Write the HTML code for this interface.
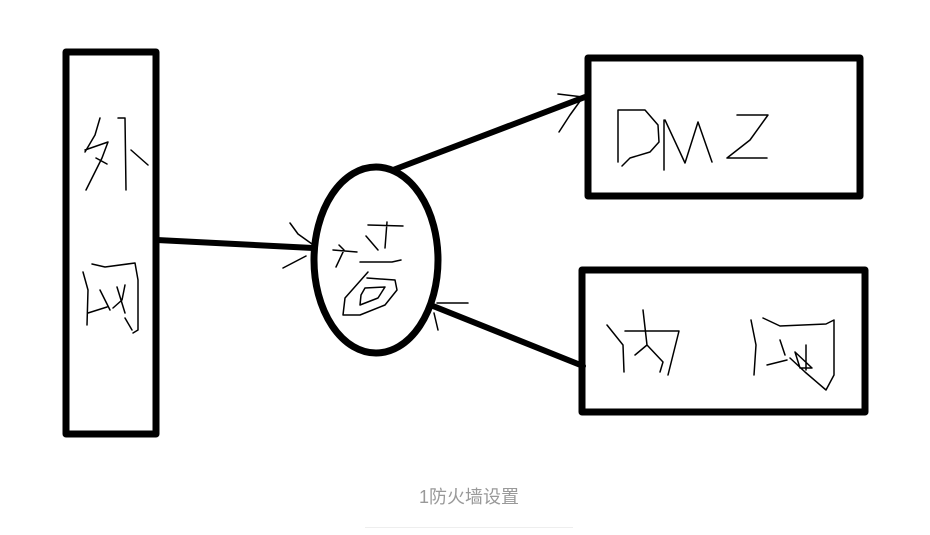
<!DOCTYPE html>
<html><head><meta charset="utf-8"><style>
html,body{margin:0;padding:0;background:#fff;width:930px;height:535px;overflow:hidden}
.cap{position:absolute;left:0;width:938px;top:483px;text-align:center;font:18px "Liberation Sans","Noto Sans CJK SC",sans-serif;color:#999}
.hr{position:absolute;left:365px;width:208px;top:527px;height:1px;background:#eee}
</style></head><body>
<svg width="930" height="535" style="position:absolute;left:0;top:0" fill="none" stroke="#000" stroke-linecap="round" stroke-linejoin="round">
<g stroke-width="7">
<rect x="66" y="52" width="90" height="382"/>
<rect x="588" y="58" width="272" height="138"/>
<rect x="582" y="270" width="283" height="142"/>
<ellipse cx="376" cy="260" rx="62" ry="93"/>
</g>
<g stroke-width="6">
<line x1="157" y1="240" x2="313" y2="248"/>
<line x1="393" y1="170" x2="585" y2="97"/>
<line x1="433" y1="306" x2="583" y2="366"/>
</g>
<g stroke-width="1.5">
<path d="M290 223 L298 234 L312 244 M283 268 L306 256"/>
<path d="M558 94 L583 97 L570 115 L559 132"/>
<path d="M437 303 L468 303 M434 313 L438 330"/>
<path d="M100 118 L95 135 L85 152 M85 150 L108 142 L102 158 L96 170 L86 190 M96 158 L107 164 M118 118 L125 118 L126 190 M131 150 L148 165"/>
<path d="M83 272 L88 290 L87 325 M92 264 L105 267 L135 263 L138 280 L138 330 L133 333 M88 313 L107 307 M100 290 L110 310 M117 287 L125 313 M113 308 L122 300 L125 285 M125 318 L132 330"/>
<path d="M339 245 L344 250 L336 267 M333 250 L357 252 M368 225 L403 226 M387 222 L385 248 M366 236 L378 250 M360 262 L392 262 L401 260 M368 272 L345 298 L343 315 L360 315 L385 305 L397 290 L395 280 L367 278 M365 288 L385 287 L378 298 L360 305 L361 295 Z"/>
<path d="M618 110 L618 162 M618 110 L645 110 L658 125 L659 142 L650 152 L630 158 L622 166 M664 120 L664 170 M665 120 L685 163 L698 122 L712 162 M737 115 L768 115 L750 140 L727 158 L767 158"/>
<path d="M607 325 L623 345 L624 372 M625 331 L679 331 L668 375 M643 310 L647 345 L635 355 M647 345 L663 362 L660 372"/>
<path d="M751 320 L756 345 L754 375 M763 318 L780 326 L826 324 L834 320 L834 375 L826 390 L805 372 L790 358 M767 365 L787 360 M780 340 L785 355 M806 345 L806 370 M795 352 L812 368 L800 368 L795 352"/>
</g>
</svg>
<div class="cap">1防火墙设置</div>
<div class="hr"></div>
</body></html>
